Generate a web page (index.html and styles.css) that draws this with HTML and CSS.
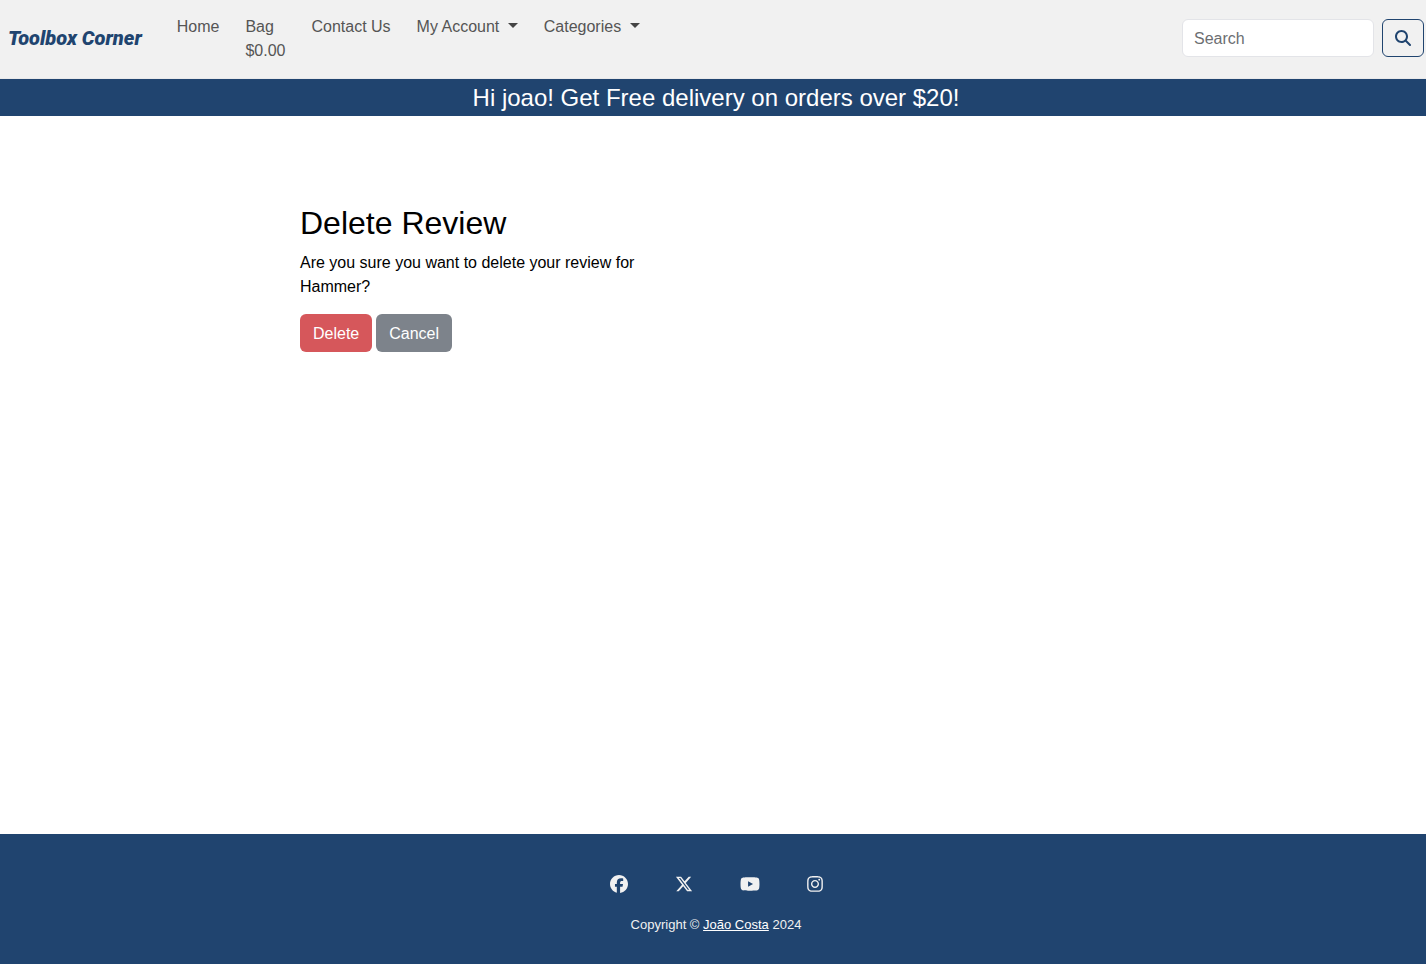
FILE: index.html
```html
<!DOCTYPE html>
<html lang="en">
<head>
<meta charset="utf-8">
<meta name="viewport" content="width=device-width, initial-scale=1">
<title>Toolbox Corner - Delete Review</title>
<link rel="stylesheet" href="styles.css">
</head>
<body>
<header class="navbar">
  <a class="brand" href="#">Toolbox Corner</a>
  <nav class="nav">
    <a class="nav-link" href="#">Home</a>
    <a class="nav-link" href="#">Bag<br>$0.00</a>
    <a class="nav-link" href="#">Contact Us</a>
    <a class="nav-link" href="#">My Account <span class="caret"></span></a>
    <a class="nav-link" href="#">Categories <span class="caret"></span></a>
  </nav>
  <form class="search">
    <input class="search-input" type="search" placeholder="Search" aria-label="Search">
    <button class="search-button" type="button" aria-label="Submit search">
      <svg class="search-icon" viewBox="0 0 512 512" aria-hidden="true"><path d="M416 208c0 45.900-14.900 88.300-40 122.700L502.600 457.400c12.500 12.500 12.500 32.800 0 45.300s-32.800 12.500-45.300 0L330.700 376c-34.400 25.200-76.800 40-122.700 40C93.100 416 0 322.900 0 208S93.100 0 208 0S416 93.100 416 208zM208 352a144 144 0 1 0 0-288 144 144 0 1 0 0 288z"/></svg>
    </button>
  </form>
</header>
<div class="banner">Hi joao! Get Free delivery on orders over $20!</div>
<main class="main">
  <div class="container">
    <section class="review">
      <h1 class="title">Delete Review</h1>
      <p class="question">Are you sure you want to delete your review for Hammer?</p>
      <div class="actions">
        <button class="btn btn-delete" type="button">Delete</button>
        <a class="btn btn-cancel" href="#">Cancel</a>
      </div>
    </section>
  </div>
</main>
<footer class="footer">
  <div class="social">
    <a class="social-link" href="#" aria-label="Facebook"><svg class="icon" viewBox="0 0 512 512"><path d="M512 256C512 114.600 397.400 0 256 0S0 114.600 0 256C0 376 82.700 476.800 194.200 504.500V334.200H141.400V256h52.800V222.300c0-87.100 39.400-127.500 125-127.500c16.200 0 44.200 3.200 55.700 6.400V172c-6-.6-16.500-1-29.600-1c-42 0-58.200 15.900-58.200 57.200V256h83.600l-14.400 78.200H287V510.100C413.800 494.800 512 386.900 512 256z"/></svg></a>
    <a class="social-link" href="#" aria-label="X"><svg class="icon" viewBox="0 0 512 512"><path d="M389.200 48h70.600L305.600 224.200 487 464H345L233.700 318.600 106.500 464H35.800L200.700 275.500 26.800 48H172.400L272.900 180.900 389.200 48zM364.400 421.800h39.100L151.100 88h-42L364.400 421.800z"/></svg></a>
    <a class="social-link" href="#" aria-label="YouTube"><svg class="icon icon-wide" viewBox="0 0 576 512"><path d="M549.700 124.100c-6.300-23.700-24.800-42.300-48.300-48.600C458.800 64 288 64 288 64S117.200 64 74.600 75.500c-23.500 6.300-42 24.900-48.300 48.600-11.400 42.900-11.400 132.300-11.400 132.300s0 89.400 11.400 132.300c6.300 23.700 24.800 41.500 48.300 47.800C117.200 448 288 448 288 448s170.800 0 213.400-11.500c23.500-6.300 42-24.200 48.300-47.800 11.400-42.900 11.400-132.300 11.400-132.300s0-89.400-11.400-132.300zm-317.500 213.500V175.200l142.700 81.200-142.700 81.200z"/></svg></a>
    <a class="social-link" href="#" aria-label="Instagram"><svg class="icon icon-narrow" viewBox="0 0 448 512"><path d="M224.100 141c-63.600 0-114.900 51.300-114.900 114.900s51.300 114.900 114.900 114.900S339 319.500 339 255.900 287.700 141 224.100 141zm0 189.600c-41.100 0-74.700-33.500-74.700-74.700s33.500-74.700 74.700-74.700 74.700 33.500 74.700 74.700-33.600 74.700-74.700 74.700zm146.400-194.300c0 14.900-12 26.800-26.800 26.800-14.900 0-26.800-12-26.800-26.800s12-26.800 26.800-26.800 26.800 12 26.800 26.800zm76.100 27.200c-1.700-35.900-9.900-67.700-36.200-93.900-26.200-26.200-58-34.400-93.900-36.200-37-2.100-147.900-2.100-184.900 0-35.800 1.700-67.600 9.900-93.900 36.100s-34.400 58-36.200 93.900c-2.100 37-2.100 147.900 0 184.900 1.700 35.900 9.900 67.700 36.200 93.900s58 34.400 93.900 36.200c37 2.100 147.900 2.100 184.900 0 35.900-1.700 67.700-9.900 93.900-36.200 26.200-26.200 34.400-58 36.200-93.900 2.100-37 2.100-147.800 0-184.800zM398.800 388c-7.800 19.600-22.900 34.700-42.600 42.600-29.500 11.700-99.500 9-132.100 9s-102.700 2.600-132.100-9c-19.600-7.800-34.700-22.900-42.600-42.600-11.700-29.500-9-99.500-9-132.100s-2.600-102.700 9-132.100c7.800-19.600 22.900-34.700 42.600-42.600 29.500-11.700 99.500-9 132.100-9s102.700-2.600 132.100 9c19.600 7.800 34.700 22.900 42.600 42.600 11.700 29.500 9 99.500 9 132.100s2.700 102.700-9 132.100z"/></svg></a>
  </div>
  <p class="copyright">Copyright © <a class="author" href="#">João Costa</a> 2024</p>
</footer>
</body>
</html>
```
FILE: styles.css
```css
* {
  box-sizing: border-box;
}

body {
  display: flex;
  flex-direction: column;
  min-height: 100vh;
  margin: 0;
  background: #fff;
  color: #000;
  font-family: "Liberation Sans", Arial, sans-serif;
  font-size: 16px;
  line-height: 24px;
}

.navbar {
  display: flex;
  align-items: center;
  padding: 6px 2px 8px 8px;
  border-bottom: 1px solid #e9e9ea;
  background: #f1f1f1;
}

.brand {
  color: #20446f;
  font-family: Roboto, sans-serif;
  font-size: 20px;
  font-style: italic;
  font-weight: 900;
  text-decoration: none;
  white-space: nowrap;
}

.nav {
  display: flex;
  flex: 1;
  gap: 26px;
  padding: 9px 0 7px;
  margin-left: 35px;
}

.nav-link {
  color: #555;
  text-decoration: none;
  white-space: nowrap;
}

.caret {
  display: inline-block;
  margin-left: 4px;
  border: 5px solid transparent;
  border-top-color: #444;
  border-bottom: 0;
  vertical-align: 4px;
}

.search {
  display: flex;
  gap: 8px;
}

.search-input {
  width: 192px;
  height: 38px;
  padding: 7px 11px 5px;
  border: 1px solid #e3e4e8;
  border-radius: 6px;
  background: #fff;
  color: #212529;
  font: inherit;
}

.search-input::placeholder {
  color: #6c6e72;
  opacity: 1;
}

.search-button {
  display: flex;
  align-items: center;
  justify-content: center;
  width: 42px;
  height: 38px;
  padding: 0;
  border: 1px solid #20446f;
  border-radius: 6px;
  background: transparent;
}

.search-icon {
  width: 16px;
  height: 16px;
  fill: #20446f;
}

.banner {
  padding: 1px 0 0 6px;
  background: #20446f;
  color: #fff;
  font-size: 24px;
  line-height: 36px;
  text-align: center;
}

.main {
  flex: 1;
  padding: 88px 0 48px 6px;
}

.container {
  max-width: 832px;
  margin: 0 auto;
}

.review {
  max-width: 392px;
}

.title {
  margin: 0 0 9px;
  font-size: 32px;
  font-weight: 400;
  line-height: 38px;
}

.question {
  margin: 0 0 15px;
}

.actions {
  display: flex;
  gap: 4px;
}

.btn {
  padding: 8px 13px 6px;
  border: 0;
  border-radius: 6px;
  color: #fff;
  font: inherit;
  text-decoration: none;
}

.btn-delete {
  background: #d6575b;
}

.btn-cancel {
  background: #7d838b;
}

.footer {
  padding: 40px 0 28px 6px;
  background: #20446f;
  color: #f1f1f1;
  text-align: center;
}

.social {
  display: flex;
  justify-content: center;
  gap: 47px;
  margin-bottom: 20px;
}

.social-link {
  display: flex;
  padding: 1px 0;
}

.icon {
  width: 18px;
  height: 18px;
  fill: #f1f1f1;
}

.icon-wide {
  width: 20px;
}

.icon-narrow {
  width: 16px;
}

.copyright {
  margin: 0;
  font-size: 13px;
  line-height: 22px;
}

.author {
  color: #fff;
}
```
